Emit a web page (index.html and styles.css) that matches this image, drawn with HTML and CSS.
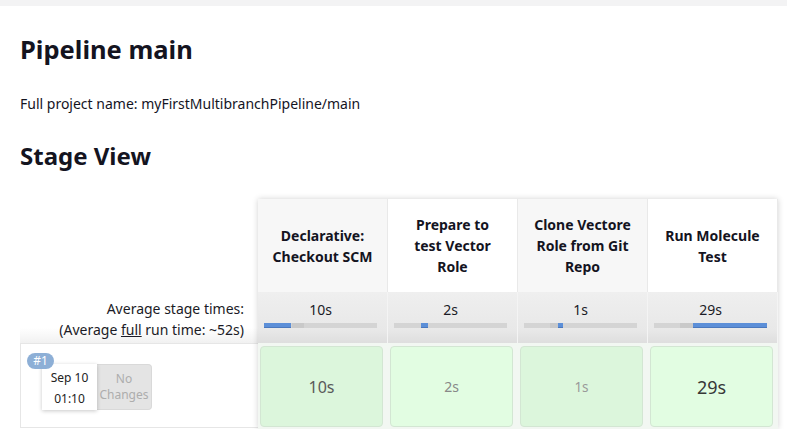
FILE: index.html
```html
<!DOCTYPE html>
<html>
<head>
<meta charset="utf-8">
<title>Pipeline main</title>
<link rel="stylesheet" href="styles.css">
</head>
<body>
<div class="topbar"></div>
<main class="content">
  <h1 class="title">Pipeline main</h1>
  <p class="project">Full project name: myFirstMultibranchPipeline/main</p>
  <h2 class="subtitle">Stage View</h2>

  <div class="stage-view">
    <div class="legend">
      <div class="legend-head"></div>
      <div class="legend-avg">
        <div>Average stage times:</div>
        <div>(Average <u>full</u> run time: ~52s)</div>
      </div>
      <div class="legend-build">
        <div class="build-info">
          <div class="date-box">
            <span class="badge">#1</span>
            <div>Sep 10</div>
            <div>01:10</div>
          </div>
          <div class="changes">No<br>Changes</div>
        </div>
      </div>
    </div>

    <div class="stages">
      <div class="head odd">Declarative: Checkout SCM</div>
      <div class="head">Prepare to test Vector Role</div>
      <div class="head odd">Clone Vectore Role from Git Repo</div>
      <div class="head">Run Molecule Test</div>

      <div class="avg">
        <div class="avg-time">10s</div>
        <div class="track"><span class="mark" style="left:28px;width:12px"></span><span class="fill" style="left:0;width:27px"></span></div>
      </div>
      <div class="avg">
        <div class="avg-time">2s</div>
        <div class="track"><span class="fill" style="left:27px;width:7px"></span></div>
      </div>
      <div class="avg">
        <div class="avg-time">1s</div>
        <div class="track"><span class="mark" style="left:26px;width:8px"></span><span class="fill" style="left:34px;width:5px"></span></div>
      </div>
      <div class="avg">
        <div class="avg-time">29s</div>
        <div class="track"><span class="mark" style="left:26px;width:13px"></span><span class="fill" style="left:39px;width:74px"></span></div>
      </div>

      <div class="cell"><div class="box dark t-10">10s</div></div>
      <div class="cell"><div class="box t-2">2s</div></div>
      <div class="cell"><div class="box dark t-1">1s</div></div>
      <div class="cell"><div class="box t-29">29s</div></div>
    </div>
  </div>
</main>
</body>
</html>
```

FILE: styles.css
```css
* { box-sizing: border-box; }

body {
  margin: 0;
  font-family: "Noto Sans", "Open Sans", "DejaVu Sans", sans-serif;
  color: #14141f;
  background: #fff;
}

.topbar {
  height: 6px;
  background: #f3f3f4;
}

.content {
  padding: 0 0 0 20px;
}

.title {
  margin: 28px 0 0;
  font-size: 25.5px;
  line-height: 31px;
  font-weight: 700;
}

.project {
  margin: 29px 0 0;
  font-size: 14px;
  line-height: 20px;
}

.subtitle {
  margin: 27px 0 0;
  font-size: 24px;
  line-height: 29px;
  font-weight: 700;
}

.stage-view {
  margin-top: 29px;
  display: flex;
  align-items: flex-start;
}

.legend {
  width: 238px;
  display: flex;
  flex-direction: column;
}

.legend-head { height: 93px; }

.legend-avg {
  height: 51px;
  padding: 6px 14px 0 0;
  text-align: right;
  font-size: 14px;
  line-height: 21px;
  color: #1b1b26;
  background: linear-gradient(#fff 70%, #f1f1f1);
}

.legend-build {
  height: 85px;
  border: 1px solid #e6e6e6;
  border-right: 0;
  padding: 20px 0 0 21px;
}

.build-info {
  display: flex;
}

.date-box {
  position: relative;
  width: 55px;
  height: 46px;
  background: #fff;
  box-shadow: 0 1px 4px rgba(0, 0, 0, 0.22);
  text-align: center;
  font-size: 12px;
  line-height: 21px;
  padding-top: 3px;
  color: #222;
}

.badge {
  position: absolute;
  left: -15px;
  top: -11px;
  width: 27px;
  height: 16px;
  border-radius: 8px;
  background: #8dafd6;
  color: #fff;
  font-size: 12px;
  line-height: 16px;
  text-align: center;
}

.changes {
  width: 55px;
  height: 46px;
  background: #e4e4e4;
  border: 1px solid #d9d9d9;
  border-left: 0;
  border-radius: 0 4px 4px 0;
  color: #adadad;
  font-size: 12px;
  line-height: 16px;
  text-align: center;
  padding-top: 6px;
}

.stages {
  width: 520px;
  display: grid;
  grid-template-columns: repeat(4, 130px);
  grid-template-rows: 93px 51px 86px;
  box-shadow: 0 0 6px rgba(0, 0, 0, 0.18);
  background: #eef3ee;
}

.head {
  display: flex;
  align-items: center;
  justify-content: center;
  text-align: center;
  padding: 0 14px;
  font-size: 14px;
  line-height: 21px;
  font-weight: 700;
  background: #fff;
  border-right: 1px solid #e9e9e9;
  color: #14141f;
}
.head.odd { background: #f7f7f7; }

.avg {
  padding: 7px 10px 0 6px;
  text-align: center;
  background: linear-gradient(#efefef, #e8e8e8 75%, #dedede);
  border-right: 1px solid #f4f4f4;
}

.avg-time {
  font-size: 14px;
  line-height: 21px;
  color: #1b1b26;
}

.track {
  position: relative;
  margin-top: 3px;
  height: 5px;
  background: #d4d4d4;
}

.track span {
  position: absolute;
  top: 0;
  height: 5px;
}

.mark { background: #c9c9c9; }

.fill {
  background: #5c8fd8;
  border-bottom: 1px solid #4a78bd;
}

.cell {
  padding: 3px 5px 2px 2px;
  background: #f2f7f2;
}

.box {
  height: 81px;
  border: 1px solid #d3e6d3;
  border-radius: 4px;
  background: #e2fde2;
  display: flex;
  align-items: center;
  justify-content: center;
}
.box.dark { background: #dcf6dc; }

.t-10 { font-size: 16px; color: #5a5a5a; }
.t-2 { font-size: 14px; color: #888; }
.t-1 { font-size: 13.5px; color: #999; }
.t-29 { font-size: 18px; color: #383838; }
```
